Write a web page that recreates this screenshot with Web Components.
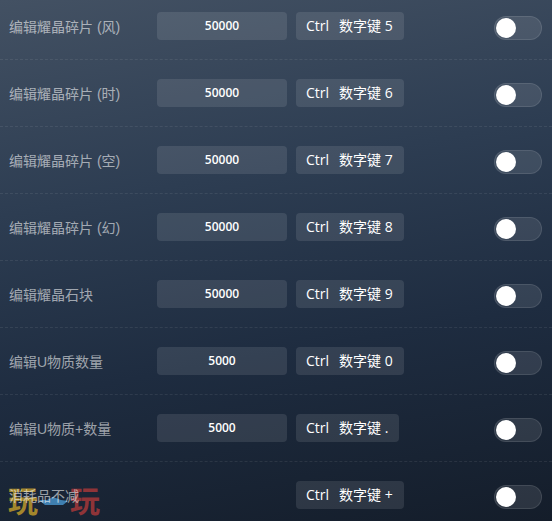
<!DOCTYPE html>
<html>
<head>
  <style>
    html, body { height: 100%; }
    body {
      margin: 0;
      overflow: hidden;
      position: relative;
      background: linear-gradient(170deg, #435163 0%, #2d3d52 35%, #1e2c40 65%, #141d2a 100%);
      font-family: "Open Sans", "Noto Sans CJK SC", sans-serif;
    }
    .list { position: relative; z-index: 1; margin-top: -7px; }
  </style>
</head>
<body>
  <site-watermark></site-watermark>
  <div class="list">
    <cheat-row label="编辑耀晶碎片 (风)" value="50000" key="5"></cheat-row>
    <cheat-row label="编辑耀晶碎片 (时)" value="50000" key="6"></cheat-row>
    <cheat-row label="编辑耀晶碎片 (空)" value="50000" key="7"></cheat-row>
    <cheat-row label="编辑耀晶碎片 (幻)" value="50000" key="8"></cheat-row>
    <cheat-row label="编辑耀晶石块" value="50000" key="9"></cheat-row>
    <cheat-row label="编辑U物质数量" value="5000" key="0"></cheat-row>
    <cheat-row label="编辑U物质+数量" value="5000" key="."></cheat-row>
    <cheat-row label="消耗品不减" key="+"></cheat-row>
  </div>

  <script>
    class ToggleSwitch extends HTMLElement {
      constructor() {
        super();
        this.attachShadow({ mode: 'open' });
        this.shadowRoot.innerHTML = `
          <style>
            :host {
              display: block;
              box-sizing: border-box;
              width: 48px;
              height: 24px;
              border-radius: 12px;
              background: rgba(255, 255, 255, 0.1);
              border: 1px solid rgba(255, 255, 255, 0.1);
              padding: 1px;
            }
            .knob {
              width: 20px;
              height: 20px;
              border-radius: 50%;
              background: #fff;
            }
          </style>
          <div class="knob"></div>
        `;
      }
    }

    class CheatRow extends HTMLElement {
      constructor() {
        super();
        this.attachShadow({ mode: 'open' });
      }

      connectedCallback() {
        const value = this.getAttribute('value');
        const input = value ? `<div class="input">${value}</div>` : '<div class="blank"></div>';
        this.shadowRoot.innerHTML = `
          <style>
            :host {
              display: flex;
              box-sizing: border-box;
              height: 67px;
              padding: 19px 10px 0 9px;
              border-bottom: 1px dashed rgba(255, 255, 255, 0.08);
              align-items: flex-start;
            }
            .label {
              width: 148px;
              height: 28px;
              line-height: 30px;
              font-family: "Liberation Sans", "Noto Sans CJK SC", sans-serif;
              font-size: 14px;
              color: rgba(255, 255, 255, 0.58);
              white-space: nowrap;
            }
            .input, .blank { width: 130px; height: 28px; margin-right: 9px; }
            .input {
              border-radius: 4px;
              background: rgba(255, 255, 255, 0.1);
              color: #fff;
              font-size: 12px;
              font-weight: 600;
              line-height: 27px;
              text-align: center;
            }
            .key {
              display: flex;
              gap: 10px;
              height: 28px;
              padding: 0 11px 0 10px;
              border-radius: 4px;
              background: rgba(255, 255, 255, 0.1);
              color: #fff;
              font-size: 14px;
              line-height: 27px;
              white-space: nowrap;
            }
            toggle-switch { margin: 4px 0 0 auto; }
          </style>
          <div class="label">${this.getAttribute('label')}</div>
          ${input}
          <div class="key"><span>Ctrl</span><span>数字键 ${this.getAttribute('key')}</span></div>
          <toggle-switch></toggle-switch>
        `;
      }
    }

    class SiteWatermark extends HTMLElement {
      constructor() {
        super();
        this.attachShadow({ mode: 'open' });
        this.shadowRoot.innerHTML = `
          <style>
            :host {
              position: absolute;
              left: 8px;
              top: 484px;
              display: flex;
              width: 92px;
              justify-content: space-between;
              font-family: "Noto Sans CJK SC", sans-serif;
              font-size: 30px;
              font-weight: bold;
              line-height: 30px;
            }
            .y { color: #a3862c; }
            .r { color: #8f3438; }
            svg { position: absolute; left: 31px; top: 13px; }
          </style>
          <span class="y">玩</span>
          <svg width="29" height="8" viewBox="0 0 29 8"><path d="M0 3 L8 3 L14 0 L22 3 L29 4 L24 8 L6 8 Z" fill="#3f7fb0"/></svg>
          <span class="r">玩</span>
        `;
      }
    }

    customElements.define('toggle-switch', ToggleSwitch);
    customElements.define('cheat-row', CheatRow);
    customElements.define('site-watermark', SiteWatermark);
  </script>
</body>
</html>
